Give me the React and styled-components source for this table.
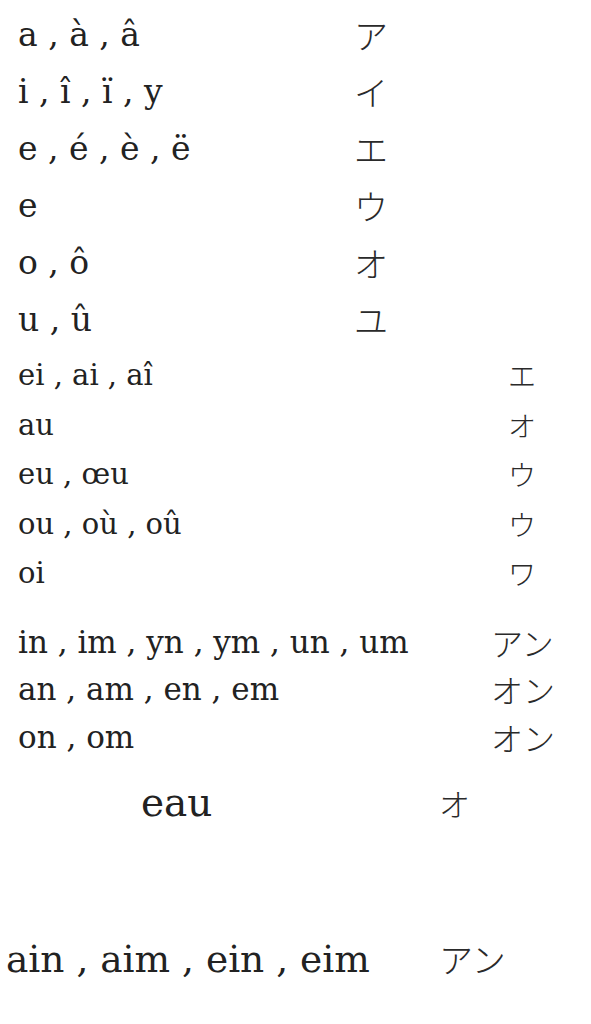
import React from "react";
import styled, { createGlobalStyle } from "styled-components";

const GlobalStyle = createGlobalStyle`
  html, body {
    margin: 0;
    padding: 0;
    background: #fff;
  }
  body {
    font-family: "DejaVu Serif", "Liberation Serif", serif;
    color: #1c1c1c;
  }
`;

const Page = styled.div`
  width: 591px;
  height: 1024px;
  overflow: hidden;
  display: flex;
  flex-direction: column;
`;

const Block = styled.div`
  display: flex;
  flex-direction: column;
  margin-top: ${(p) => p.$top}px;
  padding-left: ${(p) => p.$left}px;
`;

const Row = styled.div`
  display: grid;
  grid-template-columns: ${(p) => p.$kanaAt}px auto;
  align-items: start;
  height: ${(p) => p.$h}px;
`;

const Latin = styled.span`
  font-family: "DejaVu Serif", serif;
  font-size: ${(p) => p.$size}px;
  line-height: ${(p) => p.$h}px;
  white-space: nowrap;
  color: #222;
`;

const Kana = styled.span`
  font-family: "Noto Sans CJK JP", sans-serif;
  font-weight: 300;
  font-size: ${(p) => p.$size}px;
  line-height: ${(p) => p.$h}px;
  white-space: nowrap;
  color: #2a2a2a;
`;

const blocks = [
  {
    top: 6,
    left: 18,
    kanaAt: 336,
    h: 57,
    size: 33,
    kanaSize: 34,
    rows: [
      ["a , à , â", "ア"],
      ["i , î , ï , y", "イ"],
      ["e , é , è , ë", "エ"],
      ["e", "ウ"],
      ["o , ô", "オ"],
      ["u , û", "ユ"],
    ],
  },
  {
    top: 3,
    left: 18,
    kanaAt: 490,
    h: 49.5,
    size: 29,
    kanaSize: 28,
    rows: [
      ["ei , ai , aî", "エ"],
      ["au", "オ"],
      ["eu , œu", "ウ"],
      ["ou , où , oû", "ウ"],
      ["oi", "ワ"],
    ],
  },
  {
    top: 20,
    left: 18,
    kanaAt: 473,
    h: 47.5,
    size: 31,
    kanaSize: 32,
    rows: [
      ["in , im , yn , ym , un , um", "アン"],
      ["an , am , en , em", "オン"],
      ["on , om", "オン"],
    ],
  },
  {
    top: 17,
    left: 141,
    kanaAt: 298,
    h: 50,
    size: 39,
    kanaSize: 31,
    rows: [["eau", "オ"]],
  },
  {
    top: 106,
    left: 6,
    kanaAt: 433,
    h: 50,
    size: 37.5,
    kanaSize: 34,
    rows: [["ain , aim , ein , eim", "アン"]],
  },
];

export default function App() {
  return (
    <Page>
      <GlobalStyle />
      {blocks.map((b, i) => (
        <Block key={i} $top={b.top} $left={b.left}>
          {b.rows.map(([latin, kana], j) => (
            <Row key={j} $kanaAt={b.kanaAt} $h={b.h}>
              <Latin $size={b.size} $h={b.h}>
                {latin}
              </Latin>
              <Kana $size={b.kanaSize} $h={b.h}>
                {kana}
              </Kana>
            </Row>
          ))}
        </Block>
      ))}
    </Page>
  );
}
